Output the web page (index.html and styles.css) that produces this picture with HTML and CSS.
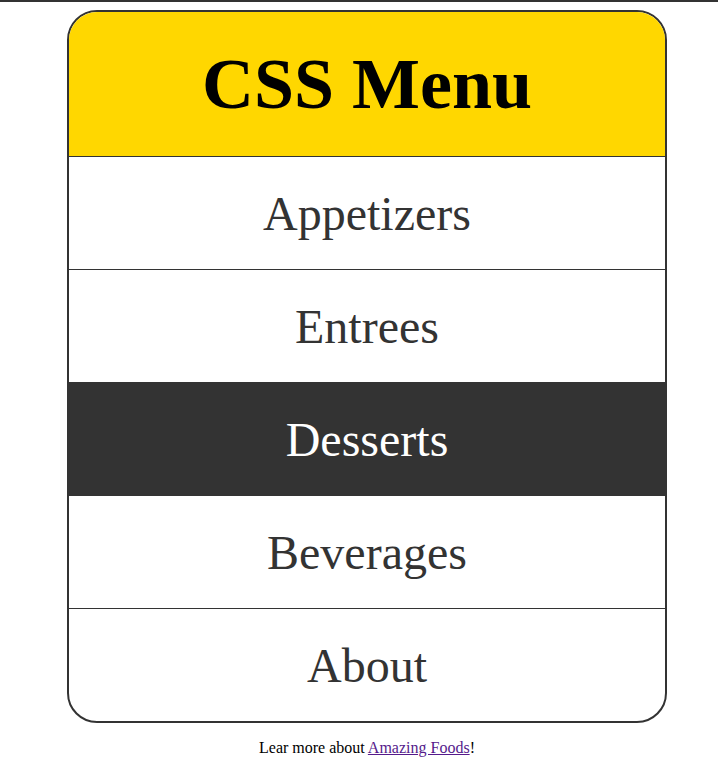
FILE: index.html
```html
<!DOCTYPE html>
<html lang="en">
<head>
    <meta charset="UTF-8">
    <meta name="viewport" content="width=device-width, initial-scale=1.0">
    <title>CSS Menu</title>
    <link rel="stylesheet" href="styles.css">
</head>
<body>
    <div class="page">
        <div class="menu">
            <h1 class="menu-title">CSS Menu</h1>
            <ul class="menu-list">
                <li><a href="#">Appetizers</a></li>
                <li><a href="#">Entrees</a></li>
                <li class="active"><a href="#">Desserts</a></li>
                <li><a href="#">Beverages</a></li>
                <li><a href="#">About</a></li>
            </ul>
        </div>
        <p class="footer">Lear more about <a href="#" class="visited">Amazing Foods</a>!</p>
    </div>
</body>
</html>
```

FILE: styles.css
```css
html {
    border-top: 2px solid #333;
}

body {
    margin: 0;
    font-family: "Liberation Serif", "Times New Roman", serif;
    background: #fff;
}

.page {
    padding: 8px 0 0 16px;
    display: flex;
    flex-direction: column;
    align-items: center;
}

.menu {
    width: 596px;
    border: 2px solid #333;
    border-radius: 30px;
    overflow: hidden;
}

.menu-title {
    margin: 0;
    height: 144px;
    display: flex;
    justify-content: center;
    align-items: center;
    background: #ffd700;
    border-bottom: 1px solid #333;
    font-size: 72px;
    font-weight: bold;
    color: #000;
}

.menu-list {
    list-style: none;
    margin: 0;
    padding: 0;
}

.menu-list li {
    height: 112px;
    border-bottom: 1px solid #333;
}

.menu-list li:last-child {
    border-bottom: none;
}

.menu-list a {
    height: 100%;
    display: flex;
    justify-content: center;
    align-items: center;
    font-size: 48px;
    color: #333;
    text-decoration: none;
}

.menu-list li.active {
    background: #333;
}

.menu-list li.active a {
    color: #fff;
}

.footer {
    margin: 16px 0;
    font-size: 16px;
    color: #000;
}

.footer a {
    color: #551a8b;
}
```
